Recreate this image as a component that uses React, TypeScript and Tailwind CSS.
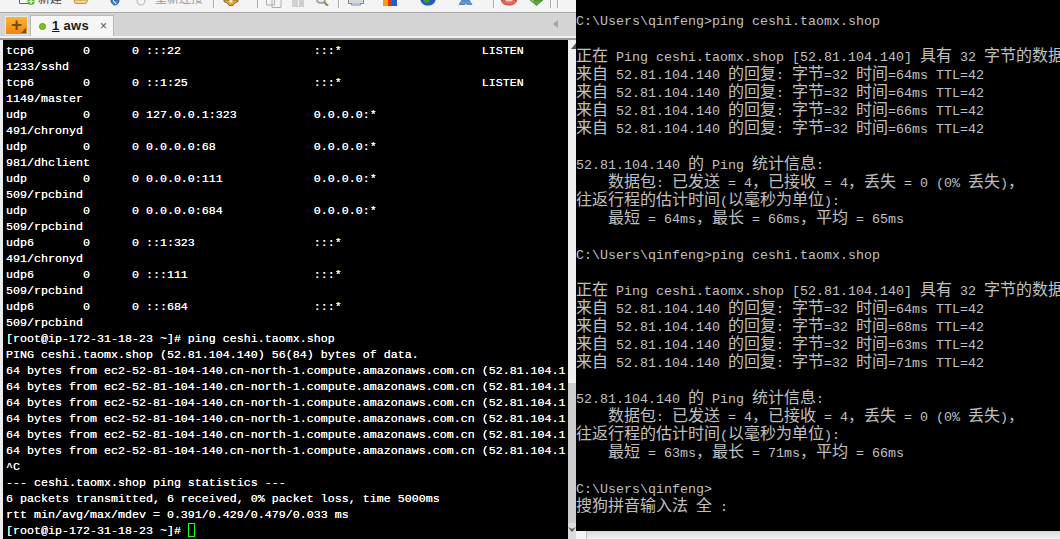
import React from "react";

const ping = "64 bytes from ec2-52-81-104-140.cn-north-1.compute.amazonaws.com.cn (52.81.104.1";
const termLines = [
  "tcp6       0      0 :::22                   :::*                    LISTEN",
  "1233/sshd",
  "tcp6       0      0 ::1:25                  :::*                    LISTEN",
  "1149/master",
  "udp        0      0 127.0.0.1:323           0.0.0.0:*",
  "491/chronyd",
  "udp        0      0 0.0.0.0:68              0.0.0.0:*",
  "981/dhclient",
  "udp        0      0 0.0.0.0:111             0.0.0.0:*",
  "509/rpcbind",
  "udp        0      0 0.0.0.0:684             0.0.0.0:*",
  "509/rpcbind",
  "udp6       0      0 ::1:323                 :::*",
  "491/chronyd",
  "udp6       0      0 :::111                  :::*",
  "509/rpcbind",
  "udp6       0      0 :::684                  :::*",
  "509/rpcbind",
  "[root@ip-172-31-18-23 ~]# ping ceshi.taomx.shop",
  "PING ceshi.taomx.shop (52.81.104.140) 56(84) bytes of data.",
  ping, ping, ping, ping, ping, ping,
  "^C",
  "--- ceshi.taomx.shop ping statistics ---",
  "6 packets transmitted, 6 received, 0% packet loss, time 5000ms",
  "rtt min/avg/max/mdev = 0.391/0.429/0.479/0.033 ms",
];

const block = (rows: string[], a: string, b: string, c: string) => [
  "C:\\Users\\qinfeng>ping ceshi.taomx.shop",
  "",
  "正在 Ping ceshi.taomx.shop [52.81.104.140] 具有 32 字节的数据:",
  ...rows.map((t) => `来自 52.81.104.140 的回复: 字节=32 时间=${t}ms TTL=42`),
  "",
  "52.81.104.140 的 Ping 统计信息:",
  "    数据包: 已发送 = 4，已接收 = 4，丢失 = 0 (0% 丢失)，",
  "往返行程的估计时间(以毫秒为单位):",
  `    最短 = ${a}ms，最长 = ${b}ms，平均 = ${c}ms`,
  "",
];
const consoleLines = [
  ...block(["64", "64", "66", "66"], "64", "66", "65"),
  ...block(["64", "68", "63", "71"], "63", "71", "66"),
  "C:\\Users\\qinfeng>",
  "搜狗拼音输入法 全 :",
];

function ConsoleLine({ text }: { text: string }) {
  const parts = text.split(/([\u3000-\u9fff\uff00-\uffef]+)/);
  return (
    <div className="h-[18px] leading-[18px] whitespace-pre">
      {parts.map((p, i) =>
        i % 2 === 1 ? (
          <span key={i} className="text-[16px] leading-[0] font-['Noto_Sans_CJK_SC',sans-serif]">{p}</span>
        ) : (
          <span key={i}>{p}</span>
        )
      )}
    </div>
  );
}

function Sep() {
  return <div className="w-[2px] h-[8px] border-l border-[#a8a8a8] bg-white shrink-0" />;
}

export default function App() {
  return (
    <div className="flex w-[1060px] h-[539px] overflow-hidden bg-black">
      {/* left window */}
      <div className="w-[576px] h-full flex flex-col bg-[#ececec] shrink-0">
        {/* toolbar, cut at the top */}
        <div className="h-[12px] bg-[#f4f4f4] flex items-start overflow-hidden shrink-0 relative font-['Noto_Sans_CJK_SC',sans-serif]">
          <svg width="18" height="6" viewBox="0 0 18 6" className="ml-[19px] shrink-0">
            <path d="M0.500 0v3.500h10" fill="#fff" stroke="#2f6fc0" />
            <circle cx="12" cy="1.500" r="3.500" fill="#5cb531" />
            <path d="M12 -1v5M9.500 1.500h5" stroke="#fff" strokeWidth="1.200" />
          </svg>
          <span className="text-[12px] leading-[14px] text-[#444] ml-[1px] w-[32px] shrink-0 -mt-[9px]">新建</span>
          <svg width="16" height="6" viewBox="0 0 16 6" className="ml-[3px] shrink-0">
            <path d="M1 0l1 3.500h11l2-3.500z" fill="#f4d68a" stroke="#c09a4a" />
          </svg>
          <svg width="10" height="6" viewBox="0 0 10 6" className="ml-[21px] shrink-0">
            <path d="M1 0c0 3 2 5 4 5s4-2 4-5z" fill="#4a8ad0" stroke="#2a5a9a" />
            <path d="M3 0l3 4" stroke="#fff" />
          </svg>
          <svg width="10" height="6" viewBox="0 0 10 6" className="ml-[16px] shrink-0">
            <path d="M1 0c0 3 2 5 4 5s4-2 4-5" fill="none" stroke="#c4c4c4" strokeWidth="1.500" />
          </svg>
          <span className="text-[12px] leading-[14px] text-[#999] ml-[9px] w-[58px] shrink-0 -mt-[9px]">重新连接</span>
          <Sep />
          <svg width="16" height="6" viewBox="0 0 16 6" className="ml-[8px] shrink-0">
            <path d="M1 0h14v1.500l-4 2-1 2h-4l-1-2-4-2z" fill="#eba832" stroke="#8a6a2a" />
            <circle cx="8" cy="1" r="1.500" fill="#fff" />
          </svg>
          <div className="w-[18px] shrink-0" />
          <Sep />
          <svg width="16" height="8" viewBox="0 0 16 8" className="ml-[7px] shrink-0">
            <path d="M0.500 0v5h8v-5M6 0v7.500h9v-7.500" fill="#f4f4f4" stroke="#b0b0b0" />
          </svg>
          <svg width="14" height="7" viewBox="0 0 14 7" className="ml-[9px] shrink-0">
            <path d="M1 0v7h6v-7zM8 0v7h5v-7z" fill="#d0d0d0" />
          </svg>
          <svg width="14" height="6" viewBox="0 0 14 6" className="ml-[11px] shrink-0">
            <path d="M1 0c0 2 2 3 4 3s4-1 4-3" fill="#e8e8e8" stroke="#999" strokeWidth="1.500" />
            <path d="M8 2l4 4" stroke="#7a9a3a" strokeWidth="2" />
          </svg>
          <div className="w-[8px] shrink-0" />
          <Sep />
          <svg width="16" height="6" viewBox="0 0 16 6" className="ml-[8px] shrink-0">
            <path d="M0.500 0v3.500h15v-3.500" fill="#d8d8d8" stroke="#888" />
            <path d="M3.500 3.500v1.500h9v-1.500" fill="#fff" stroke="#5a8ac0" />
          </svg>
          <svg width="14" height="6" viewBox="0 0 14 6" className="ml-[19px] shrink-0">
            <rect x="0" y="0" width="5" height="6" fill="#f0a010" />
            <rect x="5" y="0" width="4" height="6" fill="#e03020" />
            <rect x="9" y="0" width="5" height="6" fill="#2060d0" />
          </svg>
          <svg width="16" height="6" viewBox="0 0 16 6" className="ml-[23px] shrink-0">
            <path d="M0.500 0c0.500 3.500 3.500 5.500 7.500 5.500s7-2 7.500-5.500z" fill="#2a58c0" />
            <path d="M3 0c1 3 4 4 6 2l1-2z" fill="#3aa030" />
          </svg>
          <svg width="15" height="6" viewBox="0 0 15 6" className="ml-[22px] shrink-0">
            <path d="M1 4.500l3-4.500h7l3 4.500h-5l-1-2-1 2z" fill="#5a9ad8" stroke="#3a70b0" strokeWidth="0.700" />
          </svg>
          <div className="w-[20px] shrink-0" />
          <Sep />
          <svg width="16" height="6" viewBox="0 0 16 6" className="ml-[6px] shrink-0">
            <path d="M0.500 0c0 3.500 3.500 5 7.500 5s7.500-1.500 7.500-5z" fill="#e86a60" stroke="#c04a40" />
            <path d="M4 0c1 2 7 2 8 0" fill="#f8c8c0" />
          </svg>
          <svg width="15" height="6" viewBox="0 0 15 6" className="ml-[12px] shrink-0">
            <path d="M1 0l6.500 5.500 6.500-5.500z" fill="#5aa840" stroke="#3a7a2a" strokeWidth="0.700" />
            <path d="M2 0l3 1" stroke="#c8a8a0" />
          </svg>
          <div className="w-[6px] shrink-0" />
          <Sep />
          <div className="w-[5px] shrink-0" />
          <Sep />
        </div>
        {/* tab bar */}
        <div className="h-[24px] border-t border-[#a9a9a9] bg-[#d4d4d4] flex items-end pl-[5px] shrink-0 relative">
          <div className="w-[23px] h-[19px] mb-[1px] border border-[#e8e8e8] bg-gradient-to-b from-[#fbb72f] to-[#ee8410] flex items-center justify-center relative">
            <span className="text-[19px] leading-none font-bold text-[#7d4a12] font-['Liberation_Sans',sans-serif] -mt-[2px]">+</span>
            <span className="absolute right-[1px] bottom-[1px] w-0 h-0 border-l-[5px] border-l-transparent border-b-[5px] border-b-[#7a4a10]" />
          </div>
          <div className="w-[84px] h-[21px] ml-[2px] bg-[#f6f6f6] border border-b-0 border-[#b8b8b8] flex items-center pl-[8px] font-['Liberation_Sans',sans-serif]">
            <span className="w-[7px] h-[7px] rounded-full bg-[#7fc31c] border border-[#5b9a10] shrink-0" />
            <span className="ml-[6px] text-[13px] font-bold text-[#1a1a1a] tracking-[0.3px] whitespace-pre"><span className="underline">1</span> aws</span>
            <span className="ml-auto mr-[6px] text-[12px] leading-none text-[#555]">×</span>
          </div>
          <svg width="6" height="8" viewBox="0 0 6 8" className="absolute left-[553px] top-[7px]">
            <path d="M5 0v8l-5-4z" fill="#a4a4a4" />
          </svg>
        </div>
        <div className="h-[4px] bg-[#f2f2f2] border-b-2 border-[#9a9a9a] shrink-0" />
        {/* terminal + scrollbar */}
        <div className="flex-1 min-h-0 flex pl-[3px]">
          <div className="w-[565px] bg-black pt-[3px] pl-[3px] overflow-hidden text-[11.67px] text-white [text-shadow:0_0_0.3px_#ffffff] font-['Liberation_Mono',monospace]">
            {termLines.map((l, i) => (
              <div key={i} className="h-[16px] leading-[16px] whitespace-pre">{l}</div>
            ))}
            <div className="h-[16px] leading-[16px] whitespace-pre flex items-center">
              <span>{"[root@ip-172-31-18-23 ~]# "}</span>
              <span className="w-[7px] h-[14px] -mt-[2px] border border-[#19ff19]" />
            </div>
          </div>
          <div className="w-[8px] flex flex-col bg-[#f0f0f0]">
            <div className="h-[12px] flex items-center justify-end shrink-0">
              <svg width="5" height="6" viewBox="0 0 5 6"><path d="M5 0v6h-5z" fill="#555" /></svg>
            </div>
            <div className="flex-1" />
            <div className="h-[140px] bg-[#cdcdcd] shrink-0" />
            <div className="h-[16px] flex items-start justify-center shrink-0 pt-[4px] bg-[#dcdcdc]">
              <svg width="8" height="5" viewBox="0 0 8 5"><path d="M0 0l4 5 4-5-4 2z" fill="#555" /></svg>
            </div>
          </div>
        </div>
      </div>
      {/* right console */}
      <div className="flex-1 flex flex-col min-w-0">
        <div className="h-[531px] bg-black pt-[13px] overflow-hidden text-[13.33px] text-[#c0c0c0] font-['Liberation_Mono',monospace] shrink-0">
          {consoleLines.map((l, i) => (
            <ConsoleLine key={i} text={l} />
          ))}
        </div>
        <div className="flex-1 flex bg-gradient-to-b from-[#d8d8d8] to-[#f4f4f4]">
          <div className="w-[11px] border-r border-[#bbbbbb] bg-[#f4f4f4]" />
        </div>
      </div>
    </div>
  );
}
